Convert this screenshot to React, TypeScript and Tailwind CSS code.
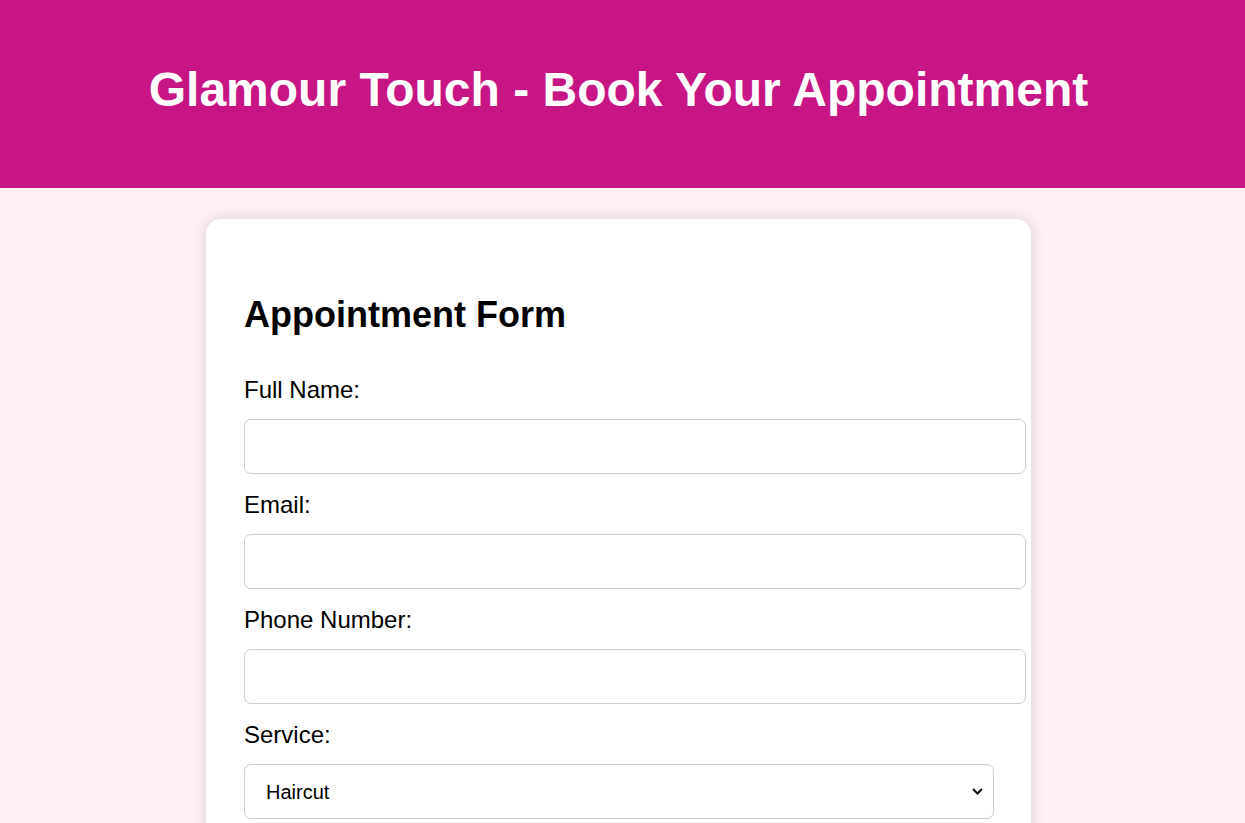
import React from "react";

const fields = [
  { label: "Full Name:", type: "text" },
  { label: "Email:", type: "email" },
  { label: "Phone Number:", type: "tel" },
];

function App() {
  return (
    <div className="min-h-screen bg-[#fff0f5] font-['Liberation_Sans',Arial,sans-serif] text-black">
      {/* header */}
      <header className="h-[188px] bg-[#c71585] pt-[62px] pr-[8px]">
        <h1 className="text-center text-[48px] font-bold leading-[55px] text-white">
          Glamour Touch - Book Your Appointment
        </h1>
      </header>

      {/* form card */}
      <main className="flex justify-center pt-[31px] pb-10 pr-[8px]">
        <div className="w-[825px] rounded-[15px] bg-white px-[38px] pt-[38px] pb-[40px] shadow-[0_0_15px_rgba(0,0,0,0.15)]">
          <h2 className="mt-[37px] mb-[24px] text-[36px] font-bold leading-[41px]">Appointment Form</h2>

          <form className="flex flex-col">
            {fields.map((f) => (
              <div key={f.label} className="flex flex-col">
                <label className="mt-[17px] mb-[15px] text-[24px] leading-[28px]">{f.label}</label>
                <input
                  type={f.type}
                  className="h-[55px] w-[782px] rounded-[7px] border border-[#ccc] bg-white px-[15px] text-[20px] outline-none"
                />
              </div>
            ))}

            <div className="flex flex-col">
              <label className="mt-[17px] mb-[15px] text-[24px] leading-[28px]">Service:</label>
              <div className="relative w-[750px]">
                <select className="h-[55px] w-full appearance-none rounded-[7px] border border-[#ccc] bg-white pl-[21px] text-[20px] outline-none">
                  <option>Haircut</option>
                  <option>Facial</option>
                  <option>Manicure</option>
                  <option>Pedicure</option>
                  <option>Makeup</option>
                </select>
                <svg
                  className="pointer-events-none absolute right-[11px] top-[24px]"
                  width="11"
                  height="7"
                  viewBox="0 0 11 7"
                  fill="none"
                >
                  <path d="M1 1 L5.5 5.5 L10 1" stroke="#111" strokeWidth="2" />
                </svg>
              </div>
            </div>

            <div className="flex flex-col">
              <label className="mt-[17px] mb-[15px] text-[24px] leading-[28px]">Date:</label>
              <input
                type="date"
                className="h-[55px] w-[782px] rounded-[7px] border border-[#ccc] bg-white px-[15px] text-[20px] outline-none"
              />
            </div>

            <button
              type="button"
              className="mt-[30px] h-[60px] w-[782px] rounded-[7px] bg-[#c71585] text-[24px] text-white"
            >
              Book Appointment
            </button>
          </form>
        </div>
      </main>
    </div>
  );
}

export default App;
